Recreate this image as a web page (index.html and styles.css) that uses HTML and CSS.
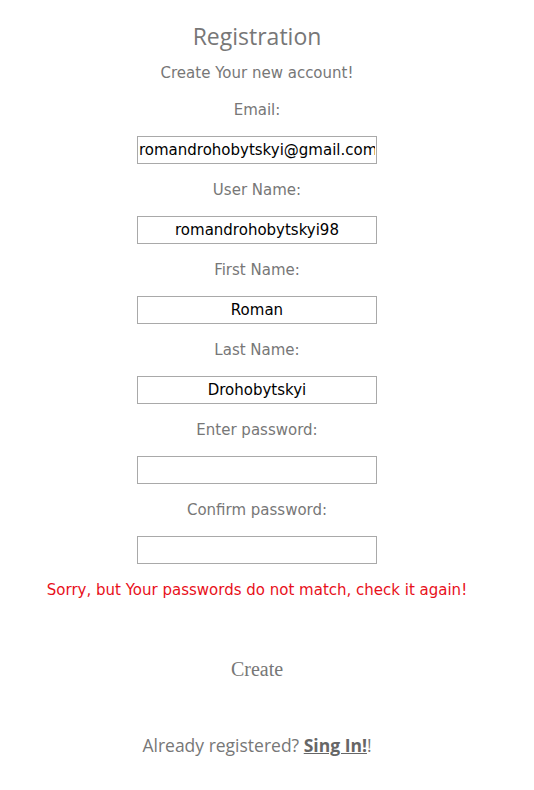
FILE: index.html
```html
<!DOCTYPE html>
<html>
<head>
<meta charset="utf-8">
<link rel="stylesheet" href="styles.css">
</head>
<body>
<div class="page">
  <h1 class="title">Registration</h1>
  <p class="subtitle">Create Your new account!</p>
  <form class="form">
    <label class="label">Email:</label>
    <input class="field" type="text" value="romandrohobytskyi@gmail.com">
    <label class="label">User Name:</label>
    <input class="field" type="text" value="romandrohobytskyi98">
    <label class="label">First Name:</label>
    <input class="field" type="text" value="Roman">
    <label class="label">Last Name:</label>
    <input class="field" type="text" value="Drohobytskyi">
    <label class="label">Enter password:</label>
    <input class="field" type="password" value="">
    <label class="label">Confirm password:</label>
    <input class="field" type="password" value="">
    <p class="error">Sorry, but Your passwords do not match, check it again!</p>
    <button class="create" type="button">Create</button>
  </form>
  <p class="signin">Already registered? <a class="link" href="#">Sing In!</a>!</p>
</div>
</body>
</html>
```
FILE: styles.css
```css
html, body {
  margin: 0;
  padding: 0;
  background: #fff;
}
.page {
  width: 514px;
  display: flex;
  flex-direction: column;
  align-items: center;
  padding-top: 22px;
}
.title {
  margin: 0;
  font-family: "Open Sans", "Noto Sans", sans-serif;
  font-weight: 400;
  font-size: 23px;
  line-height: 28px;
  color: #777;
}
.subtitle {
  margin: 13px 0 0;
  font-family: "DejaVu Sans", Verdana, sans-serif;
  font-size: 15px;
  line-height: 20px;
  color: #777;
}
.form {
  display: flex;
  flex-direction: column;
  align-items: center;
  gap: 16px;
  margin-top: 17px;
}
.label {
  font-family: "DejaVu Sans", Verdana, sans-serif;
  font-size: 15px;
  line-height: 20px;
  color: #777;
}
.field {
  box-sizing: border-box;
  width: 240px;
  height: 28px;
  margin: 0;
  padding: 0 1px;
  border: 1px solid #a9a9a9;
  background: #fff;
  font-family: "DejaVu Sans", Verdana, sans-serif;
  font-size: 15px;
  color: #000;
  text-align: center;
  outline: none;
}
.error {
  margin: 0;
  font-family: "DejaVu Sans", Verdana, sans-serif;
  font-size: 15px;
  line-height: 20px;
  color: #e8101a;
}
.create {
  margin-top: 41px;
  border: none;
  background: none;
  padding: 0;
  font-family: "Liberation Serif", serif;
  font-size: 20px;
  line-height: 24px;
  color: #777;
}
.signin {
  margin: 52px 0 0;
  font-family: "Open Sans", "Noto Sans", sans-serif;
  font-size: 17.5px;
  line-height: 24px;
  color: #777;
}
.link {
  color: #666;
  font-weight: 700;
  text-decoration: underline;
}
```
